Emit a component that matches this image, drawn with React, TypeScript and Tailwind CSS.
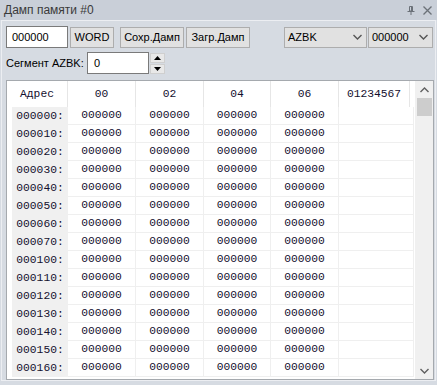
import React from 'react';

// Hex dump window: toolbar on top, address/data grid below
const rows = ['000000', '000010', '000020', '000030', '000040', '000050', '000060', '000070', '000100', '000110', '000120', '000130', '000140', '000150', '000160'];
const cols = ['00', '02', '04', '06'];

const Chevron: React.FC<{ up?: boolean; className?: string }> = ({ up, className }) => (
  <svg width="9" height="6" viewBox="0 0 9 6" className={className}>
    <path d={up ? 'M0.5 5L4.5 1L8.5 5' : 'M0.5 1L4.5 5L8.5 1'} fill="none" stroke="currentColor" strokeWidth="1.4" />
  </svg>
);

const Select: React.FC<{ value: string; width: string }> = ({ value, width }) => (
  <div className={`${width} h-[21px] bg-[#e1e1e1] border border-[#adadad] flex items-center justify-between pl-[3px] pr-[4px]`}>
    <span>{value}</span>
    <Chevron className="text-[#555]" />
  </div>
);

const App: React.FC = () => {
  return (
    <div
      className="w-[437px] h-[385px] overflow-hidden bg-[#d6dbe2] text-[11px] text-black flex flex-col"
      style={{ fontFamily: '"Liberation Sans", Arial, sans-serif' }}
    >
      {/* Title bar */}
      <div className="h-[20px] bg-[#c9cfd8] flex items-center justify-between pl-[4px] pr-[5px] shrink-0">
        <span className="text-[12px] text-[#3a3a3a]">Дамп памяти #0</span>
        <div className="flex items-center gap-[8px] text-[#6b7178]">
          <svg width="8" height="9" viewBox="0 0 8 9">
            <path d="M2.5 0.5H5.5V5H2.5Z M0.5 5.5H7.5 M4 5.5V9 M4.5 1V5" fill="none" stroke="currentColor" strokeWidth="1" />
          </svg>
          <svg width="9" height="9" viewBox="0 0 9 9">
            <path d="M0.5 0.5L8.5 8.5M8.5 0.5L0.5 8.5" fill="none" stroke="currentColor" strokeWidth="1.3" />
          </svg>
        </div>
      </div>

      {/* Body */}
      <div className="flex-1 mx-[1px] mb-[4px] border border-[#eceef2] flex flex-col pl-[4px] pr-[1px] pt-[5px] min-h-0">
        {/* Row 1 */}
        <div className="flex items-center h-[22px]">
          <div className="w-[62px] h-[22px] bg-white border border-[#7a7a7a] flex items-center pl-[5px]">000000</div>
          <div className="ml-[2px] w-[44px] h-[21px] bg-[#e1e1e1] border border-[#adadad] flex items-center justify-center">WORD</div>
          <div className="ml-[6px] w-[64px] h-[21px] bg-[#e1e1e1] border border-[#adadad] flex items-center justify-center">Сохр.Дамп</div>
          <div className="ml-[2px] w-[64px] h-[21px] bg-[#e1e1e1] border border-[#adadad] flex items-center justify-center">Загр.Дамп</div>
          <div className="ml-auto flex items-center gap-[1px] mr-[1px]">
            <Select value="AZBK" width="w-[83px]" />
            <Select value="000000" width="w-[65px]" />
          </div>
        </div>

        {/* Row 2 */}
        <div className="flex items-center h-[22px] mt-[4px]">
          <span className="w-[81px]">Сегмент AZBK:</span>
          <div className="w-[62px] h-[22px] bg-white border border-[#7a7a7a] flex items-center pl-[6px]">0</div>
          <div className="ml-[1px] flex flex-col gap-[1px]">
            <div className="w-[15px] h-[10px] bg-[#e8e8e8] border border-[#cfcfcf] flex items-center justify-center">
              <svg width="7" height="4" viewBox="0 0 7 4"><path d="M0 4L3.5 0L7 4Z" fill="#000" /></svg>
            </div>
            <div className="w-[15px] h-[10px] bg-[#e8e8e8] border border-[#cfcfcf] flex items-center justify-center">
              <svg width="7" height="4" viewBox="0 0 7 4"><path d="M0 0L3.5 4L7 0Z" fill="#000" /></svg>
            </div>
          </div>
        </div>

        {/* Grid */}
        <div
          className="mt-[6px] flex-1 min-h-0 bg-white border border-[#a5a9ae] flex overflow-hidden text-[11.3px] text-[#14102e]"
          style={{ fontFamily: '"Liberation Mono", "Courier New", monospace' }}
        >
          <div className="w-[408px] flex flex-col">
            <div className="h-[26px] flex shrink-0">
              <div className="w-[61px] flex items-center justify-center border-r border-[#e6e6e6]">Адрес</div>
              {cols.map((c) => (
                <div key={c} className={`${c === '04' ? 'w-[67px]' : 'w-[68px]'} flex items-center justify-center border-r border-[#e6e6e6]`}>{c}</div>
              ))}
              <div className="w-[71px] flex items-center justify-center border-r border-[#e6e6e6]">01234567</div>
            </div>
            {rows.map((r) => (
              <div key={r} className="h-[18px] flex shrink-0">
                <div className="w-[61px] pl-[5px] flex">
                  <div className="flex-1 bg-[#f0f0f0] flex items-center justify-center">{r}:</div>
                </div>
                {cols.map((c) => (
                  <div key={c} className={`${c === '04' ? 'w-[67px]' : 'w-[68px]'} flex items-center justify-center border-r border-b border-[#efefef]`}>000000</div>
                ))}
                <div className="w-[75px] border-r border-b border-[#efefef]" />
              </div>
            ))}
          </div>
          {/* Scrollbar */}
          <div className="flex-1 bg-[#f0f0f0] flex flex-col items-center">
            <div className="h-[17px] flex items-center justify-center text-[#606060]">
              <Chevron up />
            </div>
            <div className="w-[15px] h-[18px] bg-[#cdcdcd]" />
            <div className="mt-auto h-[17px] flex items-center justify-center text-[#606060]">
              <Chevron />
            </div>
          </div>
        </div>
      </div>
    </div>
  );
};

export default App;
